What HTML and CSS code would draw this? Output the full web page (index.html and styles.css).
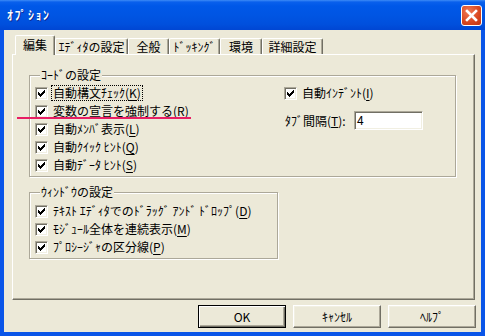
FILE: index.html
```html
<!DOCTYPE html>
<html lang="ja">
<head>
  <meta charset="UTF-8">
  <title>ｵﾌﾟｼｮﾝ</title>
  <link rel="stylesheet" href="styles.css">
</head>
<body>
  <div class="window">
    <div class="titlebar">
      <span class="title">ｵﾌﾟｼｮﾝ</span>
      <span class="close">
        <svg width="19" height="19" viewBox="0 0 19 19"><path d="M5 5 L14 14 M14 5 L5 14" stroke="#fff" stroke-width="2.6" stroke-linecap="square"/></svg>
      </span>
    </div>

    <div class="client">
      <div class="tabs">
        <div class="tab active">編集</div>
        <div class="tab">ｴﾃﾞｨﾀの設定</div>
        <div class="tab">全般</div>
        <div class="tab">ﾄﾞｯｷﾝｸﾞ</div>
        <div class="tab">環境</div>
        <div class="tab">詳細設定</div>
      </div>

      <div class="panel">
        <fieldset class="group group-code">
          <legend>ｺｰﾄﾞの設定</legend>
          <div class="code-cols">
            <div class="col-left">
              <div class="chk"><span class="box"><svg class="tick" width="11" height="11" viewBox="0 0 11 11"><path d="M2 4h1v3h-1z M3 5h1v3h-1z M4 6h1v3h-1z M5 5h1v3h-1z M6 4h1v3h-1z M7 3h1v3h-1z M8 2h1v3h-1z"/></svg></span><span class="txt focus">自動構文ﾁｪｯｸ(<u>K</u>)</span></div>
              <div class="chk"><span class="box"><svg class="tick" width="11" height="11" viewBox="0 0 11 11"><path d="M2 4h1v3h-1z M3 5h1v3h-1z M4 6h1v3h-1z M5 5h1v3h-1z M6 4h1v3h-1z M7 3h1v3h-1z M8 2h1v3h-1z"/></svg></span><span class="txt">変数の宣言を強制する(<u>R</u>)</span></div>
              <div class="chk"><span class="box"><svg class="tick" width="11" height="11" viewBox="0 0 11 11"><path d="M2 4h1v3h-1z M3 5h1v3h-1z M4 6h1v3h-1z M5 5h1v3h-1z M6 4h1v3h-1z M7 3h1v3h-1z M8 2h1v3h-1z"/></svg></span><span class="txt">自動ﾒﾝﾊﾞ表示(<u>L</u>)</span></div>
              <div class="chk"><span class="box"><svg class="tick" width="11" height="11" viewBox="0 0 11 11"><path d="M2 4h1v3h-1z M3 5h1v3h-1z M4 6h1v3h-1z M5 5h1v3h-1z M6 4h1v3h-1z M7 3h1v3h-1z M8 2h1v3h-1z"/></svg></span><span class="txt">自動ｸｲｯｸ ﾋﾝﾄ(<u>Q</u>)</span></div>
              <div class="chk"><span class="box"><svg class="tick" width="11" height="11" viewBox="0 0 11 11"><path d="M2 4h1v3h-1z M3 5h1v3h-1z M4 6h1v3h-1z M5 5h1v3h-1z M6 4h1v3h-1z M7 3h1v3h-1z M8 2h1v3h-1z"/></svg></span><span class="txt">自動ﾃﾞｰﾀ ﾋﾝﾄ(<u>S</u>)</span></div>
            </div>
            <div class="col-right">
              <div class="chk"><span class="box"><svg class="tick" width="11" height="11" viewBox="0 0 11 11"><path d="M2 4h1v3h-1z M3 5h1v3h-1z M4 6h1v3h-1z M5 5h1v3h-1z M6 4h1v3h-1z M7 3h1v3h-1z M8 2h1v3h-1z"/></svg></span><span class="txt">自動ｲﾝﾃﾞﾝﾄ(<u>I</u>)</span></div>
              <div class="field">
                <span class="field-label">ﾀﾌﾞ間隔(<u>T</u>):</span>
                <span class="input">4</span>
              </div>
            </div>
          </div>
        </fieldset>

        <fieldset class="group group-win">
          <legend>ｳｨﾝﾄﾞｳの設定</legend>
          <div class="chk"><span class="box"><svg class="tick" width="11" height="11" viewBox="0 0 11 11"><path d="M2 4h1v3h-1z M3 5h1v3h-1z M4 6h1v3h-1z M5 5h1v3h-1z M6 4h1v3h-1z M7 3h1v3h-1z M8 2h1v3h-1z"/></svg></span><span class="txt">ﾃｷｽﾄ ｴﾃﾞｨﾀでのﾄﾞﾗｯｸﾞ ｱﾝﾄﾞ ﾄﾞﾛｯﾌﾟ(<u>D</u>)</span></div>
          <div class="chk"><span class="box"><svg class="tick" width="11" height="11" viewBox="0 0 11 11"><path d="M2 4h1v3h-1z M3 5h1v3h-1z M4 6h1v3h-1z M5 5h1v3h-1z M6 4h1v3h-1z M7 3h1v3h-1z M8 2h1v3h-1z"/></svg></span><span class="txt">ﾓｼﾞｭｰﾙ全体を連続表示(<u>M</u>)</span></div>
          <div class="chk"><span class="box"><svg class="tick" width="11" height="11" viewBox="0 0 11 11"><path d="M2 4h1v3h-1z M3 5h1v3h-1z M4 6h1v3h-1z M5 5h1v3h-1z M6 4h1v3h-1z M7 3h1v3h-1z M8 2h1v3h-1z"/></svg></span><span class="txt">ﾌﾟﾛｼｰｼﾞｬの区分線(<u>P</u>)</span></div>
        </fieldset>
      </div>

      <div class="buttons">
        <button class="btn default">OK</button>
        <button class="btn">ｷｬﾝｾﾙ</button>
        <button class="btn">ﾍﾙﾌﾟ</button>
      </div>
    </div>

    <!-- 赤線 (注釈) -->
    <div class="mark"></div>
  </div>
</body>
</html>
```

FILE: styles.css
```css
* {
  box-sizing: border-box;
}

body {
  margin: 0;
  background: #fff;
  font-family: "Noto Sans CJK JP", "MS UI Gothic", sans-serif;
  font-size: 12px;
  line-height: 14px;
  color: #000;
}

.window {
  position: relative;
  width: 485px;
  height: 336px;
  background: #0a55e8;
  display: flex;
  flex-direction: column;
}

.titlebar {
  height: 30px;
  flex: none;
  display: flex;
  align-items: center;
  padding: 0 3px 0 7px;
  background: linear-gradient(#3d8bf6 0, #0a60ec 2px, #0058e8 6px, #0055e3 15px, #0050dd 24px, #0046d3 30px);
}

.title {
  color: #fff;
  font-weight: bold;
  letter-spacing: 1.5px;
  text-shadow: 1px 1px 0 #0b2a96;
}

.close {
  margin-left: auto;
  width: 21px;
  height: 21px;
  border: 1px solid #fff;
  border-radius: 3px;
  background: radial-gradient(circle at 35% 30%, #f07a56, #d8461f 60%, #c03412);
  display: flex;
  align-items: center;
  justify-content: center;
}

.client {
  flex: 1;
  margin: 0 4px 4px;
  background: #ece9d8;
  display: flex;
  flex-direction: column;
}

/* tabs */
.tabs {
  display: flex;
  align-items: flex-end;
  height: 20px;
  margin-top: 5px;
  margin-bottom: -1px;
  padding-left: 11px;
}

.tab {
  height: 17px;
  text-align: center;
  line-height: 16px;
  border-top: 1px solid #fff;
  border-left: 1px solid #fff;
  border-right: 1px solid #716f64;
  border-radius: 2px 2px 0 0;
  box-shadow: inset -1px 0 0 #aca899;
  background: #ece9d8;
}

.tab:nth-child(1) { width: 40px; }
.tab:nth-child(2) { width: 73px; }
.tab:nth-child(3) { width: 41px; }
.tab:nth-child(4) { width: 51px; }
.tab:nth-child(5) { width: 42px; }
.tab:nth-child(6) { width: 61px; }

.tab.active {
  height: 20px;
  line-height: 17px;
  position: relative;
  z-index: 1;
}

.panel {
  height: 246px;
  margin: 0 6px 0 8px;
  padding: 13px 0 0 16px;
  border-top: 1px solid #fff;
  border-left: 1px solid #fff;
  border-right: 1px solid #716f64;
  border-bottom: 1px solid #716f64;
  box-shadow: inset -1px -1px 0 #aca899;
}

/* group boxes */
.group {
  margin: 0;
  min-inline-size: 0;
  border: 1px solid #aca899;
  box-shadow: inset 1px 1px 0 #fff, 1px 1px 0 #fff;
  padding: 2px 0 2px 5px;
}

.group legend {
  margin-left: 5px;
  padding: 0 1px;
  line-height: 14px;
  background: #ece9d8;
}

.group-code {
  width: 427px;
}

.group-win {
  width: 249px;
  margin-top: 8px;
  padding-top: 3px;
}

.code-cols {
  display: flex;
}

.col-left {
  width: 249px;
}

.chk {
  height: 18px;
  display: flex;
  align-items: center;
  gap: 5px;
}

.box {
  width: 13px;
  height: 13px;
  flex: none;
  background: #fff;
  border: 1px solid;
  border-color: #aca899 #fff #fff #aca899;
  box-shadow: inset 1px 1px 0 #716f64, inset -1px -1px 0 #f1efe2;
}

.tick {
  display: block;
  shape-rendering: crispEdges;
}

.txt u {
  text-underline-offset: 2px;
}

.focus {
  outline: 1px dotted #000;
  margin-left: -1px;
  padding: 0 1px;
}

.field {
  display: flex;
  align-items: center;
  height: 19px;
  margin-top: 9px;
}

.field-label {
  width: 70px;
  padding-left: 1px;
}

.input {
  width: 69px;
  height: 19px;
  padding-left: 2px;
  line-height: 15px;
  background: #fff;
  border: 1px solid;
  border-color: #aca899 #fff #fff #aca899;
  box-shadow: inset 1px 1px 0 #716f64, inset -1px -1px 0 #f1efe2;
}

/* buttons */
.buttons {
  display: flex;
  justify-content: flex-end;
  gap: 7px;
  margin-top: 5px;
  padding-right: 5px;
}

.btn {
  width: 88px;
  height: 23px;
  padding: 0;
  font: inherit;
  color: #000;
  background: #ece9d8;
  border: 1px solid;
  border-color: #fff #716f64 #716f64 #fff;
  box-shadow: inset -1px -1px 0 #aca899, inset 1px 1px 0 #f1efe2;
}

.btn.default {
  border-color: #000;
  box-shadow: inset 1px 1px 0 #fff, inset -1px -1px 0 #716f64, inset -2px -2px 0 #aca899;
}

.mark {
  position: absolute;
  left: 17px;
  top: 117px;
  width: 174px;
  height: 2px;
  background: #e81e64;
}
```
